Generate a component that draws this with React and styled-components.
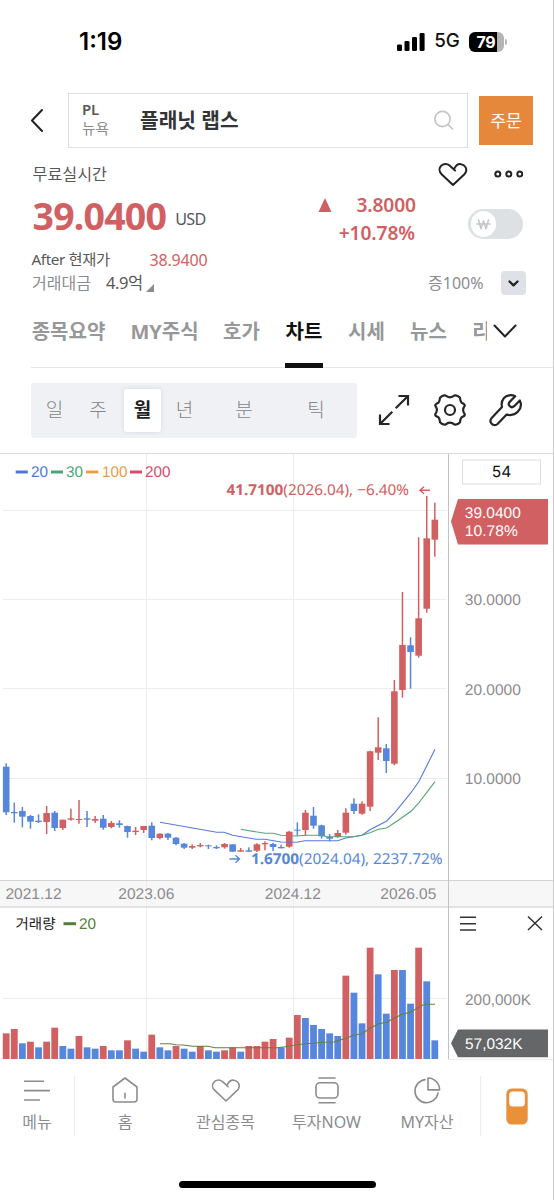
import React from "react";
import styled, { createGlobalStyle } from "styled-components";

const RED = "#d16062";
const BLUE = "#5687dc";
const KR = '"Noto Sans", "Noto Sans CJK KR", sans-serif';
const HELV = '"Liberation Sans", "Noto Sans CJK KR", sans-serif';

const GlobalStyle = createGlobalStyle`
  * { box-sizing: border-box; }
  body { margin: 0; background: #fff; font-family: ${KR}; }
  svg { display: block; flex: none; }
`;

const Screen = styled.main`
  width: 554px;
  height: 1200px;
  overflow: hidden;
  display: flex;
  flex-direction: column;
  background: #fff;
  border-right: 1px solid #cbcbcd;
`;

const Text = styled.span`
  flex: none;
  white-space: nowrap;
  line-height: 1;
  font-family: ${(p) => p.$family || KR};
  font-size: ${(p) => p.$size}px;
  font-weight: ${(p) => p.$weight || 400};
  letter-spacing: ${(p) => p.$track || 0}px;
  color: ${(p) => p.$color || "#58585a"};
  margin-left: ${(p) => p.$ml || 0}px;
  padding-bottom: ${(p) => p.$lift || 0}px;
`;

/* Status bar */
const StatusBar = styled.header`
  height: 93px;
  padding: 0 46px 10px 79px;
  display: flex;
  align-items: center;
  justify-content: space-between;
`;
const StatusIcons = styled.div`
  display: flex;
  align-items: center;
  gap: 9px;
`;
const Battery = styled.div`
  display: flex;
  align-items: center;
  gap: 1.5px;
`;
const BatteryBody = styled.div`
  width: 35px;
  height: 20px;
  border-radius: 6px;
  display: flex;
  align-items: center;
  justify-content: center;
  background: linear-gradient(90deg, #000 79%, #b5b5b5 79%);
`;
const BatteryCap = styled.div`
  width: 2px;
  height: 6px;
  border-radius: 0 2px 2px 0;
  background: #b5b5b5;
`;

/* Search row */
const SearchRow = styled.div`
  height: 55px;
  display: flex;
  align-items: center;
  padding-left: 30px;
`;
const SearchBox = styled.div`
  width: 400px;
  height: 55px;
  margin-left: 24px;
  padding: 0 12px 0 13px;
  border: 1px solid #dedfe3;
  display: flex;
  align-items: center;
`;
const Ticker = styled.div`
  width: 58px;
  padding-bottom: 4px;
  display: flex;
  flex-direction: column;
  gap: 4px;
`;
const Grow = styled.div`
  flex: 1;
`;
const OrderButton = styled.button`
  width: 54px;
  height: 49px;
  margin-left: 11px;
  padding: 0;
  border: 0;
  background: #e6883c;
`;

/* Quote summary */
const Quote = styled.section`
  height: 155px;
  padding: 15px 26px 0 32px;
  display: flex;
  justify-content: space-between;
`;
const QuoteLeft = styled.div`
  display: flex;
  flex-direction: column;
`;
const QuoteRight = styled.div`
  width: 207px;
  display: flex;
  flex-direction: column;
`;
const Line = styled.div`
  height: ${(p) => p.$h}px;
  display: flex;
  align-items: center;
  justify-content: ${(p) => (p.$end ? "flex-end" : "flex-start")};
  gap: ${(p) => p.$gap || 0}px;
  padding-right: ${(p) => p.$pr || 0}px;
`;
const PriceLine = styled(Line)`
  padding-top: 4px;
`;
const ChangeArea = styled.div`
  height: 78px;
  display: flex;
  align-items: center;
  justify-content: space-between;
  padding-right: 4px;
`;
const Changes = styled.div`
  width: 96px;
  padding-bottom: 10px;
  display: flex;
  flex-direction: column;
`;
const Switch = styled.div`
  width: 55px;
  height: 30px;
  padding: 2px 3px;
  border-radius: 15px;
  background: #dee1e4;
`;
const Knob = styled.div`
  width: 25px;
  height: 26px;
  border-radius: 50%;
  background: #fff;
  display: flex;
  align-items: center;
  justify-content: center;
`;
const DropButton = styled.div`
  width: 25px;
  height: 24px;
  border-radius: 4px;
  background: #dee1e5;
  display: flex;
  align-items: center;
  justify-content: center;
`;

/* Tabs */
const TabBar = styled.nav`
  height: 65px;
  margin-left: 31px;
  border-bottom: 1px solid #e4e4e6;
  display: flex;
  align-items: stretch;
`;
const TabList = styled.div`
  width: 456px;
  height: 65px;
  display: flex;
  gap: 25px;
  overflow: hidden;
`;
const Tab = styled.div`
  flex: none;
  width: ${(p) => p.$w}px;
  padding-top: 19px;
  display: flex;
  justify-content: center;
  align-items: flex-start;
  border-bottom: ${(p) => (p.$on ? "5px solid #111" : "0")};
`;
const TabMore = styled.div`
  padding: 21px 0 0 6px;
`;

/* Interval toolbar */
const Toolbar = styled.div`
  height: 85px;
  padding: 15px 0 0 31px;
  display: flex;
`;
const Intervals = styled.div`
  width: 326px;
  height: 55px;
  padding: 6px 0;
  border-radius: 3px;
  background: #f0f1f4;
  display: flex;
`;
const Interval = styled.div`
  width: ${(p) => p.$w}px;
  height: 43px;
  margin-left: ${(p) => (p.$on ? 6 : 0)}px;
  border-radius: 3px;
  display: flex;
  align-items: center;
  justify-content: center;
  background: ${(p) => (p.$on ? "#fff" : "transparent")};
  box-shadow: ${(p) => (p.$on ? "0 0 5px rgba(0,0,0,.1)" : "none")};
`;
const Tools = styled.div`
  height: 54px;
  margin-left: 19.5px;
  display: flex;
  align-items: center;
  gap: 22px;
`;

/* Chart */
const ChartArea = styled.section`
  height: 607px;
  display: flex;
`;

/* Bottom navigation */
const BottomNav = styled.nav`
  height: 121px;
  display: flex;
  padding-top: 16px;
`;
const NavItem = styled.div`
  width: ${(p) => p.$w}px;
  height: 60px;
  padding-right: ${(p) => p.$pr || 0}px;
  display: flex;
  flex-direction: column;
  align-items: center;
  gap: 10px;
  border-right: ${(p) => (p.$rule ? "1px solid #ececee" : "0")};
`;
const WalletSlot = styled.div`
  flex: 1;
  height: 61px;
  display: flex;
  align-items: center;
  justify-content: center;
`;
const HomeIndicator = styled.div`
  width: 197px;
  height: 7px;
  margin: 0 0 0 179px;
  border-radius: 4px;
  background: #000;
`;

const TABS = [
  ["종목요약", 75], ["MY주식", 67], ["호가", 37], ["차트", 38], ["시세", 37], ["뉴스", 37], ["리", 19],
];
const INTERVALS = [["일", 47], ["주", 40], ["월", 37], ["년", 47], ["분", 72], ["틱", 72]];

/* kind, high, body top, body bottom, low: in chart pixels from the top of the price panel */
const CANDLES = [
  "b 23.3 26.7 72.3 75", "b 62.7 72 73.3 82.7", "b 67 71 76.7 87.3", "b 75 76 81.7 88.7", "b 74.3 80.7 82 83",
  "r 66 73 82 94", "b 71 72.7 88 91", "r 79.7 79.7 88 90", "r 68.7 78.3 79.7 80.7", "r 60 79 80 83.7",
  "b 71 78.3 79.7 87", "r 76 79 80.7 83", "b 75 78.7 87.7 89.7", "r 81 83 87 88.3", "b 80.3 83.3 85 87.7",
  "b 85.7 86 92 97.7", "r 87 90.7 92 95", "r 86 86 90 93", "b 82.3 85.7 98 100.3", "r 93.3 93.7 98 99.3",
  "b 93 93.7 97.7 100", "b 97 97.7 104 105.3", "b 103 103.7 107.7 109", "r 104.3 106 107.7 109",
  "r 103 105 106.3 107.3", "b 104.7 105.3 106.3 109", "b 105.3 107 108.3 109", "r 103 104 107.3 108.7",
  "b 104.3 104.3 111.7 111.7", "r 108 110.3 111.7 111.7", "b 107.3 110.3 111.7 111.7", "r 103.3 104.3 110.7 112",
  "r 101.3 103 104.3 110.3", "b 103 104 107 111", "b 104.7 107 108.3 108.3", "r 91 91.7 106.7 107.7",
  "b 82.3 89.7 90.7 95.7", "r 70 72.7 90 95.7", "b 67 75.7 85.7 88.7", "b 84.7 85.3 96.3 98.7",
  "b 94 97 98.7 101.3", "r 90 93 97 97.7", "r 68.3 72.7 92.7 94.7", "b 58.3 63.7 71 74", "r 61.3 63.7 73.7 74.7",
  "r 10.7 11.3 66.7 71", "r -22.7 7.3 12.7 20", "b 4 8.3 21 33", "r -60 -48.7 23.7 25.3", "r -148 -95 -50 -42.3",
  "b -102.7 -94.7 -88 -51.3", "r -202.7 -121.7 -84.3 -82.3", "r -244 -201.7 -131.3 -127.3", "r -237.3 -220.3 -200.3 -183.3",
].map((s) => s.split(" ").map((v, i) => (i ? +v + 286.5 : v)));

const VOLUMES =
  "r401 r388 b431 r426 b443 r426 r384 b439 b447 r409 b443 b447 r439 b452 b452 r422 b447 b456 r405 b443 b452 r439 b447 b456 r439 b452 b456 r452 r443 b456 r439 r439 r426 r418 b443 r414 r346 b355 b376 b388 b401 b409 r228 b279 b371 r144 b224 b342 r211 b211 b312 r144 b245 b422"
    .split(" ")
    .map((s) => [s[0], (478 - +s.slice(1)) / 3]);

const cx = (i) => 6.2 + i * 8.087;
const tone = (k) => (k === "r" ? RED : BLUE);

const MA20 = "160,822.3 216.7,832.3 224,832.3 232.7,835.3 256.7,839.3 265,839.3 281,842 296.7,842.3 305,840.7 337.7,840.7 345.7,838 362,835.3 370,829.7 386.7,821 395,812.3 411,792.7 419,781.3 435,749.3";
const MA30 = "240.7,829.3 265,833.3 273.3,833.3 281,835.3 296.7,836 305.3,835.3 321.7,835.3 326.7,836.7 353.3,836.7 362,835.3 370,832.7 378.3,829.3 386.7,828 398.3,820.3 411,811.3 419,802.7 435,781.7";
const VMA = "160,1043.7 170,1043.7 176,1044.7 183,1045 193,1046.3 208,1046.3 215,1047.7 277,1047.7 285,1046.7 297,1044.7 305.3,1043.7 313.7,1043.3 322,1042.3 333.7,1042 346,1038.3 354,1035 362,1033.7 370.3,1028 378.7,1023.7 386.3,1022.3 402,1014.3 410.3,1012.3 422.7,1005 427,1004.3 435,1004.3";

const ChartSvg = styled.svg`
  font-family: ${HELV};
  font-size: 15.4px;
  text-rendering: geometricPrecision;
`;
const NoteText = styled.text`
  font-family: ${KR};
  font-size: 15px;
  fill: ${(p) => p.$fill};
`;

function Label({ x, y, w, fill = "#8c8c8e", children, ...rest }) {
  return (
    <text x={x} y={y} textLength={w} lengthAdjust="spacingAndGlyphs" fill={fill} {...rest}>
      {children}
    </text>
  );
}

function Chart() {
  return (
    <ChartSvg width="553" height="607" viewBox="0 453 553 607">
      <rect x="0" y="880" width="553" height="27" fill="#f7f7f8" />
      <g stroke="#ededef" strokeWidth="1">
        <path d="M3 510.5H447M3 599.5H447M3 688.5H447M3 778.5H447M3 998.5H447M146.5 454V1059M293.5 454V1059" />
      </g>
      <g strokeWidth="1">
        <path d="M0 453.5H553" stroke="#d9d9db" />
        <path d="M0 880.5H553" stroke="#d4d4d6" />
        <path d="M0 907H553" stroke="#e2e2e4" strokeWidth="2" />
        <path d="M448.5 454V1059" stroke="#c2c2c4" />
        <path d="M448 1059.5H553" stroke="#ececee" />
      </g>

      {CANDLES.map(([k, h, t, b, l], i) => (
        <g key={i} fill={tone(k)} transform="translate(0 453.5)">
          <rect x={cx(i) - 0.75} y={h} width="1.5" height={l - h} />
          <rect x={cx(i) - 3.3} y={t} width="6.6" height={b - t} />
        </g>
      ))}
      {VOLUMES.map(([k, h], i) => (
        <rect key={i} x={cx(i) - 3.4} y={1059 - h} width="6.8" height={h} fill={tone(k)} />
      ))}
      <g fill="none" strokeWidth="1.1">
        <polyline points={MA20} stroke="#5a78dd" />
        <polyline points={MA30} stroke="#55a577" />
        <polyline points={VMA} stroke="#65803f" />
      </g>

      <g strokeWidth="3">
        <path d="M15.7 472H27.8" stroke="#4c78dc" />
        <path d="M51 472H63" stroke="#4ba577" />
        <path d="M86 472H98.3" stroke="#ea9c47" />
        <path d="M130 472H142" stroke="#d94a68" />
        <path d="M63.5 923.7H76" stroke="#557e35" />
      </g>
      <Label x="31" y="477" w="17" fill="#4c78dc">20</Label>
      <Label x="66" y="477" w="17" fill="#4ba577">30</Label>
      <Label x="102" y="477" w="25.5" fill="#ea9c47">100</Label>
      <Label x="145" y="477" w="25.5" fill="#d94a68">200</Label>

      <NoteText x="226.5" y="495" $fill={RED} textLength="182.5" lengthAdjust="spacingAndGlyphs">
        <tspan fontWeight="700">41.7100</tspan>(2026.04), −6.40%
      </NoteText>
      <path d="M430 490.3H420M424 486.8L420 490.3L424 493.8" fill="none" stroke={RED} strokeWidth="1.4" />
      <NoteText x="251" y="864" $fill={BLUE} textLength="191.5" lengthAdjust="spacingAndGlyphs">
        <tspan fontWeight="700">1.6700</tspan>(2024.04), 2237.72%
      </NoteText>
      <path d="M229.5 859H239.5M235.5 855.2L239.5 859L235.5 862.8" fill="none" stroke={BLUE} strokeWidth="1.4" />

      <Label x="5.5" y="899.3" w="56">2021.12</Label>
      <Label x="118.3" y="899.3" w="56">2023.06</Label>
      <Label x="264.8" y="899.3" w="56">2024.12</Label>
      <Label x="380.3" y="899.3" w="56">2026.05</Label>

      <rect x="462.5" y="460" width="78" height="24" fill="#fff" stroke="#dcdde1" />
      <Label x="491.7" y="477.3" w="19.5" fill="#111" fontSize="15.5" fontFamily="Inter, sans-serif">54</Label>
      <path d="M458 499H548V544.5H458L451 521.5Z" fill={RED} />
      <Label x="464.8" y="518" w="56" fill="#fff">39.0400</Label>
      <Label x="464.8" y="536" w="53" fill="#fff">10.78%</Label>
      <Label x="464.8" y="605" w="56">30.0000</Label>
      <Label x="464.8" y="695" w="56">20.0000</Label>
      <Label x="464.8" y="784" w="56">10.0000</Label>

      <Label x="15.5" y="928.8" w="40" fill="#222" fontSize="14.5">거래량</Label>
      <Label x="79" y="929" w="17" fill="#557e35">20</Label>
      <path d="M460 917.3H476M460 923.7H476M460 930H476M528 916.5L542 930M542 916.5L528 930" stroke="#333" strokeWidth="1.5" />
      <Label x="465" y="1004.8" w="66">200,000K</Label>
      <path d="M458 1029.5H548V1057.3H458L451 1043.3Z" fill="#656668" />
      <Label x="465" y="1049" w="57.5" fill="#fff">57,032K</Label>
    </ChartSvg>
  );
}

const line = { fill: "none", strokeLinecap: "round", strokeLinejoin: "round" };

function Heart({ color, width = 2 }) {
  return (
    <svg width="30" height="28" viewBox="0 0 30 28" {...line} stroke={color} strokeWidth={width}>
      <path d="M16.6 8.2C18 5.2 20.6 3.8 23 4.2C27.4 4.8 29.4 9.2 27.6 12.6C27.2 13.3 26.8 13.8 26.4 14.2L15 25L3.6 14.2C1.2 12 .9 8.6 2.8 6.2C5.2 3.4 9 3.4 11.6 5.6L17 10.6" />
    </svg>
  );
}

function NavIcon({ name }) {
  const common = { width: 30, height: 28, viewBox: "0 0 30 28", ...line, stroke: "#8b8c8f", strokeWidth: 1.6 };
  switch (name) {
    case "menu":
      return <svg {...common} strokeLinecap="butt"><path d="M2 5.3H22M2 14.6H28M2 24H18" /></svg>;
    case "home":
      return <svg {...common}><path d="M15 2L27 11V23Q27 26 24 26H6Q3 26 3 23V11ZM15 17.3V22" /></svg>;
    case "heart":
      return <Heart color="#8b8c8f" width={1.6} />;
    case "now":
      return <svg {...common}><rect x="4" y="6.7" width="22" height="15.3" rx="4" /><path d="M7 2H23M7 26.7H23" /></svg>;
    default:
      return <svg {...common}><path d="M13 3.6A11.6 11.6 0 1 0 26 17.1M16 2V13.9H27.6A11.8 11.8 0 0 0 16 2Z" /></svg>;
  }
}

const NAV = [
  ["menu", "메뉴", 75, true], ["home", "홈", 100], ["heart", "관심종목", 101],
  ["now", "투자NOW", 101], ["pie", "MY자산", 104, true, 3],
];

export default function App() {
  return (
    <Screen>
      <GlobalStyle />
      <StatusBar>
        <Text $family="Inter, sans-serif" $size={24} $weight={600} $color="#000">1:19</Text>
        <StatusIcons>
          <svg width="28" height="18" viewBox="0 0 28 18">
            <rect x="0" y="11.5" width="5" height="6.5" rx="1.3" />
            <rect x="7.5" y="8" width="5" height="10" rx="1.3" />
            <rect x="15" y="4" width="5" height="14" rx="1.3" />
            <rect x="22.6" y="0" width="5" height="18" rx="1.3" />
          </svg>
          <Text $family="Inter, sans-serif" $size={18.8} $weight={500} $color="#111" $track={-0.2}>5G</Text>
          <Battery>
            <BatteryBody>
              <Text $family="Inter, sans-serif" $size={16} $weight={700} $color="#fff" $track={-0.3}>79</Text>
            </BatteryBody>
            <BatteryCap />
          </Battery>
        </StatusIcons>
      </StatusBar>

      <SearchRow>
        <svg width="14" height="24" viewBox="0 0 14 24" {...line} stroke="#222" strokeWidth="2">
          <path d="M12 1L2 11.5L12 22" />
        </svg>
        <SearchBox>
          <Ticker>
            <Text $size={15} $weight={600} $color="#58595b" $track={-0.3}>PL</Text>
            <Text $size={14.7} $color="#8b8c8f">뉴욕</Text>
          </Ticker>
          <Text $size={20.3} $weight={700} $color="#333436">플래닛 랩스</Text>
          <Grow />
          <svg width="22" height="22" viewBox="0 0 22 22" {...line} stroke="#c4c5c8" strokeWidth="1.7">
            <circle cx="9.5" cy="9" r="7.6" />
            <path d="M15 14.5L19.5 19" />
          </svg>
        </SearchBox>
        <OrderButton><Text $size={17.2} $color="#fff">주문</Text></OrderButton>
      </SearchRow>

      <Quote>
        <QuoteLeft>
          <Line $h={22}><Text $size={16.2} $ml={0.5}>무료실시간</Text></Line>
          <PriceLine $h={65}>
            <Text $size={37.5} $weight={700} $color={RED} $track={-0.8} $ml={0.5} $lift={7}>39.0400</Text>
            <Text $size={16.2} $ml={9} $track={-0.7}>USD</Text>
          </PriceLine>
          <Line $h={19}>
            <Text $size={15.3} $track={-0.4} $ml={-0.5}>After 현재가</Text>
            <Text $size={16} $color={RED} $ml={40} $track={-0.2}>38.9400</Text>
          </Line>
          <Line $h={28}>
            <Text $size={16} $color="#8b8c8f">거래대금</Text>
            <Text $size={16.5} $ml={15} $track={-0.4}>4.9억</Text>
            <svg width="12" height="18" viewBox="0 0 12 18"><path d="M11 10V18H3Z" fill="#8b8c8f" /></svg>
          </Line>
        </QuoteLeft>
        <QuoteRight>
          <Line $h={22} $end $gap={26} $pr={4.5}>
            <Heart color="#222" />
            <svg width="29" height="10" viewBox="0 0 29 10" fill="none" stroke="#222" strokeWidth="2">
              <circle cx="3.8" cy="5" r="2.5" /><circle cx="14.8" cy="5" r="2.5" /><circle cx="25.8" cy="5" r="2.5" />
            </svg>
          </Line>
          <ChangeArea>
            <Changes>
              <Line $h={28} $end $gap={24}>
                <svg width="14" height="14" viewBox="0 0 14 14"><path d="M7 0L13.5 14H.5Z" fill={RED} /></svg>
                <Text $size={19.2} $weight={600} $color={RED} $track={-0.1}>3.8000</Text>
              </Line>
              <Line $h={28} $end $pr={1}>
                <Text $size={19.2} $weight={600} $color={RED} $track={-0.1}>+10.78%</Text>
              </Line>
            </Changes>
            <Switch>
              <Knob>
                <svg width="15" height="11" viewBox="0 0 15 11" {...line} stroke="#c5c7ca" strokeWidth="1.6">
                  <path d="M2.5 1L5 9.7L7.5 2L10 9.7L12.5 1M.8 5H14.2" />
                </svg>
              </Knob>
            </Switch>
          </ChangeArea>
          <Line $h={40} $end $gap={17.5} $pr={1}>
            <Text $size={16} $color="#8b8c8f" $lift={1}>증100%</Text>
            <DropButton>
              <svg width="11" height="7" viewBox="0 0 11 7" {...line} stroke="#222" strokeWidth="2.3">
                <path d="M1.5 1.5L5.5 5.3L9.5 1.5" />
              </svg>
            </DropButton>
          </Line>
        </QuoteRight>
      </Quote>

      <TabBar>
        <TabList>
          {TABS.map(([name, w]) => (
            <Tab key={name} $w={w} $on={name === "차트"}>
              <Text $size={20} $weight={700} $color={name === "차트" ? "#111" : "#97989a"}>{name}</Text>
            </Tab>
          ))}
        </TabList>
        <TabMore>
          <svg width="24" height="15" viewBox="0 0 24 15" {...line} stroke="#222" strokeWidth="2">
            <path d="M1.5 1.5L12 12.5L22.5 1.5" />
          </svg>
        </TabMore>
      </TabBar>

      <Toolbar>
        <Intervals>
          {INTERVALS.map(([name, w]) => (
            <Interval key={name} $w={w} $on={name === "월"}>
              <Text $size={19} $weight={name === "월" ? 700 : 300} $color={name === "월" ? "#222" : "#858689"}>{name}</Text>
            </Interval>
          ))}
        </Intervals>
        <Tools>
          <svg width="34" height="34" viewBox="0 0 34 34" {...line} strokeLinecap="butt" strokeLinejoin="miter" stroke="#252628" strokeWidth="2.2">
            <path d="M21.5 3H31V12.5M31 3L18.7 15.3M15.3 18.7L3 31M3 21.5V31H12.5" />
          </svg>
          <svg width="34" height="34" viewBox="0 0 34 34" {...line} stroke="#252628" strokeWidth="2.2">
            <path d="M12.3 2.4Q14.8 4.3 17 4.3Q19.2 4.3 21.7 2.4Q24.6 2 27 4.8Q27.2 8.2 28.6 9.8Q31.8 11 31.8 12.6Q30.1 15 30.1 17Q30.1 19 31.8 21.4Q31.8 23 28.6 24.2Q27.2 25.8 27 29.2Q24.6 32 21.7 31.6Q19.2 29.7 17 29.7Q14.8 29.7 12.3 31.6Q9.4 32 7 29.2Q6.8 25.8 5.4 24.2Q2.2 23 2.2 21.4Q3.9 19 3.9 17Q3.9 15 2.2 12.6Q2.2 11 5.4 9.8Q6.8 8.2 7 4.8Q9.4 2 12.3 2.4Z" />
            <circle cx="17" cy="17" r="5" />
          </svg>
          <svg width="34" height="34" viewBox="0 0 34 34" {...line} stroke="#252628" strokeWidth="2.2">
            <path d="M26.2 3.3C22.5 1.3 17.6 2 14.8 5.2C12.6 7.8 12.3 11 13 14L2.9 24.8C1.1 26.8 1.1 29.2 2.7 30.8C4.4 32.6 7 32.4 8.8 30.7L17.6 21.6C21.8 22.6 26 21.7 28.8 18.8C32 15.5 32.5 11 30.8 7.4L25.2 13.2C23.7 14.5 21.9 14.4 20.7 13.1C19.5 11.8 19.4 10.2 20.7 8.9Z" />
          </svg>
        </Tools>
      </Toolbar>

      <ChartArea><Chart /></ChartArea>

      <BottomNav>
        {NAV.map(([icon, label, w, rule, pr]) => (
          <NavItem key={icon} $w={w} $rule={rule} $pr={pr}>
            <NavIcon name={icon} />
            <Text $size={16} $color="#8b8c8f">{label}</Text>
          </NavItem>
        ))}
        <WalletSlot>
          <svg width="22" height="37" viewBox="0 0 22 37">
            <rect x=".3" y=".5" width="21.4" height="36" rx="5.5" fill="#ea9038" />
            <rect x="3.2" y="3.6" width="15.6" height="15" rx="3.5" fill="#fff" />
          </svg>
        </WalletSlot>
      </BottomNav>
      <HomeIndicator />
    </Screen>
  );
}
